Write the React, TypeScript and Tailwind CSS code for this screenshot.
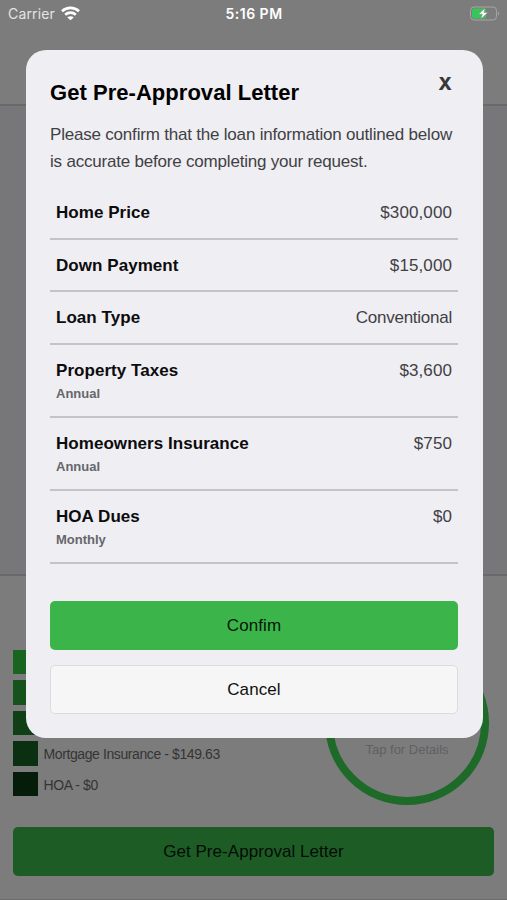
import clsx from "clsx";

const rows = [
  { label: "Home Price", value: "$300,000" },
  { label: "Down Payment", value: "$15,000" },
  { label: "Loan Type", value: "Conventional" },
  { label: "Property Taxes", value: "$3,600", period: "Annual" },
  { label: "Homeowners Insurance", value: "$750", period: "Annual" },
  { label: "HOA Dues", value: "$0", period: "Monthly" },
];

const legend = [
  { color: "bg-[#19641f]", text: "" },
  { color: "bg-[#16531c]", text: "" },
  { color: "bg-[#0f3f16]", text: "" },
  { color: "bg-[#0b3011]", text: "Mortgage Insurance - $149.63" },
  { color: "bg-[#061c0b]", text: "HOA - $0" },
];

function StatusBar() {
  return (
    <div className="grid h-[27px] grid-cols-3 items-center pl-[8px] pr-[7px] font-['Inter',sans-serif] text-white">
      <div className="flex items-center gap-[6px]">
        <span className="text-[14px] leading-none tracking-[0.15px] text-[#e4e4e4]">Carrier</span>
        <svg width="19" height="15" viewBox="0 0 19 15" fill="none" stroke="white" strokeWidth="2.7" className="-mt-px">
          <path d="M1 5.2C5.8.8 13.2.8 18 5.2" />
          <path d="M4.2 8.7c3-2.700 7.600-2.700 10.600 0" />
          <path d="M9.500 14.300 6.300 11.400c1.700-1.500 4.700-1.500 6.400 0z" fill="white" stroke="none" />
        </svg>
      </div>
      <span className="text-center text-[14px] font-semibold leading-none tracking-[0.5px]">5:16 PM</span>
      <div className="flex justify-end">
        <svg width="31" height="15" viewBox="0 0 31 15" fill="none">
          <rect x="1.500" y="1" width="26" height="13" rx="3.500" stroke="#a6a6a6" />
          <path d="M29 5.500v4c1.600-.6 1.600-3.400 0-4z" fill="#a6a6a6" />
          <rect x="3" y="2.500" width="14" height="10" rx="2" fill="#35c759" />
          <path d="M16 2 9.500 8.300h3.800L11.800 13 19 6.400h-4z" fill="white" stroke="#7c7c7c" strokeWidth=".5" />
        </svg>
      </div>
    </div>
  );
}

function ConfirmModal() {
  return (
    <div className="absolute left-[25.5px] top-[50px] h-[687.5px] w-[457px] rounded-[20px] bg-[#efeef3] px-[24.5px]">
      <div className="flex h-[71px] items-start justify-between">
        <h1 className="pt-[30px] text-[22px] font-bold leading-[26px] tracking-[0.04px] text-black">Get Pre-Approval Letter</h1>
        <button className="mr-[6px] mt-[23px] font-['Inter',sans-serif] text-[18px] font-extrabold leading-[22px] text-[#38383a]">X</button>
      </div>
      <p className="whitespace-nowrap text-[17px] leading-[27px] tracking-[-0.2px] text-[#414144]">
        Please confirm that the loan information outlined below
        <br />
        is accurate before completing your request.
      </p>

      <div className="mt-[12px]">
        {rows.map((row) => (
          <div
            key={row.label}
            className={clsx(
              "flex justify-between border-b-2 border-[#c3c3c8] px-[6px] pt-[15px] leading-[22px]",
              row.period ? "h-[73.3px]" : "h-[52.5px]"
            )}
          >
            <div>
              <div className="text-[17px] font-bold tracking-[0.05px] text-[#0c0c0d]">{row.label}</div>
              {row.period && <div className="text-[13px] font-bold leading-[24px] text-[#66666a]">{row.period}</div>}
            </div>
            <div className={clsx("text-[17px] text-[#414144]", row.value === "Conventional" ? "tracking-[-0.25px]" : "tracking-[0.1px]")}>
              {row.value}
            </div>
          </div>
        ))}
      </div>

      <div className="mt-[36.5px] flex flex-col gap-[15px] text-[17px]">
        <button className="h-[49px] rounded-[5px] bg-[#3bb54a] tracking-[0.1px] text-[#07150a]">Confim</button>
        <button className="h-[49px] rounded-[5px] border border-[#dcdce0] bg-[#f6f6f6] tracking-[0.1px] text-[#101010]">Cancel</button>
      </div>
    </div>
  );
}

export default function App() {
  return (
    <div className="relative flex h-[900px] w-full flex-col overflow-hidden border-b border-[#6c6c6c] bg-[#7c7c7c] font-['Liberation_Sans',Arial,sans-serif]">
      <StatusBar />
      <div className="h-[77px]" />
      <div className="h-[472px] border-y-2 border-[#69696c] bg-[#77777a]" />

      <div className="flex flex-1 flex-col px-[13px]">
        <div className="mt-[65px] flex h-[186px] items-start justify-between">
          <div className="flex flex-col gap-[6px] pt-[8.5px]">
            {legend.map((item) => (
              <div key={item.color} className="flex items-center gap-[6px]">
                <div className={clsx("h-[24.5px] w-[24.5px]", item.color)} />
                <span className="pt-[3px] text-[14px] tracking-[-0.4px] text-[#343434]">{item.text}</span>
              </div>
            ))}
          </div>
          <div className="mr-[5px] flex h-[164px] w-[164px] items-center justify-center rounded-full border-[8px] border-[#1d6a29]">
            <span className="pt-[54px] text-[13px] text-[#606062]">Tap for Details</span>
          </div>
        </div>
        <button className="h-[49px] rounded-[5px] bg-[#1d5c25] text-[17px] tracking-[0.05px] text-[#040d05]">Get Pre-Approval Letter</button>
      </div>

      <ConfirmModal />
    </div>
  );
}
